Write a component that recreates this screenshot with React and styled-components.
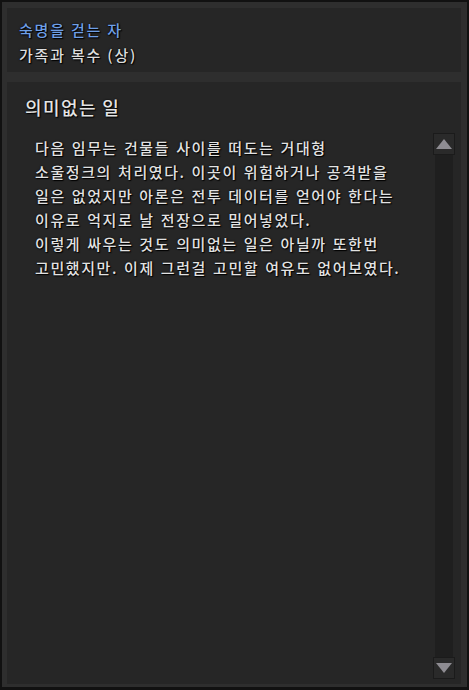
import styled, { createGlobalStyle } from "styled-components";

const Global = createGlobalStyle`
  html, body {
    margin: 0;
    padding: 0;
    background: #0c0c0c;
  }
  * {
    box-sizing: border-box;
  }
`;

const Frame = styled.div`
  width: 469px;
  height: 690px;
  background: #2e2e2e;
  border: 2px solid #111;
  border-bottom-width: 3px;
  padding: 6px 6px 3px 5px;
  display: flex;
  flex-direction: column;
  gap: 10px;
  font-family: "Noto Sans CJK KR", "Noto Sans", sans-serif;
  text-shadow: 0 0 2px #000, 1px 1px 1px #000;
`;

const Header = styled.div`
  background: #262626;
  height: 64px;
  padding: 9px 12px 0;
  display: flex;
  flex-direction: column;
`;

const Quest = styled.div`
  color: ${(p) => p.color};
  font-size: 15px;
  font-weight: 500;
  line-height: 25px;
  letter-spacing: 1.8px;
`;

const Body = styled.div`
  flex: 1;
  background: #262626;
  display: flex;
  flex-direction: column;
  padding: 12px 6px 5px 18px;
`;

const Title = styled.div`
  color: #e4e4e4;
  font-size: 18px;
  font-weight: 500;
  line-height: 26px;
  letter-spacing: 1.4px;
`;

const Content = styled.div`
  flex: 1;
  display: flex;
  margin-top: 13px;
`;

const Text = styled.p`
  flex: 1;
  margin: 0;
  padding: 3px 0 0 10px;
  color: #e2e2e2;
  font-size: 15px;
  font-weight: 500;
  line-height: 24px;
  letter-spacing: 1.6px;
  word-spacing: 1px;
  white-space: pre-line;
`;

const Scroll = styled.div`
  width: 22px;
  display: flex;
  flex-direction: column;
  align-items: center;
`;

const ScrollBtn = styled.div`
  width: 22px;
  height: 22px;
  background: #2a2a2a;
  border: 1px solid #1b1b1b;
  display: flex;
  align-items: center;
  justify-content: center;
`;

const Track = styled.div`
  flex: 1;
  width: 18px;
  background: #1f1f1f;
`;

const Arrow = ({ down }) => (
  <svg width="16" height="10" viewBox="0 0 16 10">
    <polygon
      points={down ? "0,0 16,0 8,10" : "0,10 16,10 8,0"}
      fill="#8e8c92"
    />
  </svg>
);

const story = `다음 임무는 건물들 사이를 떠도는 거대형
소울정크의 처리였다. 이곳이 위험하거나 공격받을
일은 없었지만 아론은 전투 데이터를 얻어야 한다는
이유로 억지로 날 전장으로 밀어넣었다.
이렇게 싸우는 것도 의미없는 일은 아닐까 또한번
고민했지만. 이제 그런걸 고민할 여유도 없어보였다.`;

export default function App() {
  return (
    <>
      <Global />
      <Frame>
        <Header>
          <Quest color="#6f9fe6">숙명을 걷는 자</Quest>
          <Quest color="#dcdcdc">가족과 복수 (상)</Quest>
        </Header>
        <Body>
          <Title>의미없는 일</Title>
          <Content>
            <Text>{story}</Text>
            <Scroll>
              <ScrollBtn>
                <Arrow />
              </ScrollBtn>
              <Track />
              <ScrollBtn>
                <Arrow down />
              </ScrollBtn>
            </Scroll>
          </Content>
        </Body>
      </Frame>
    </>
  );
}
